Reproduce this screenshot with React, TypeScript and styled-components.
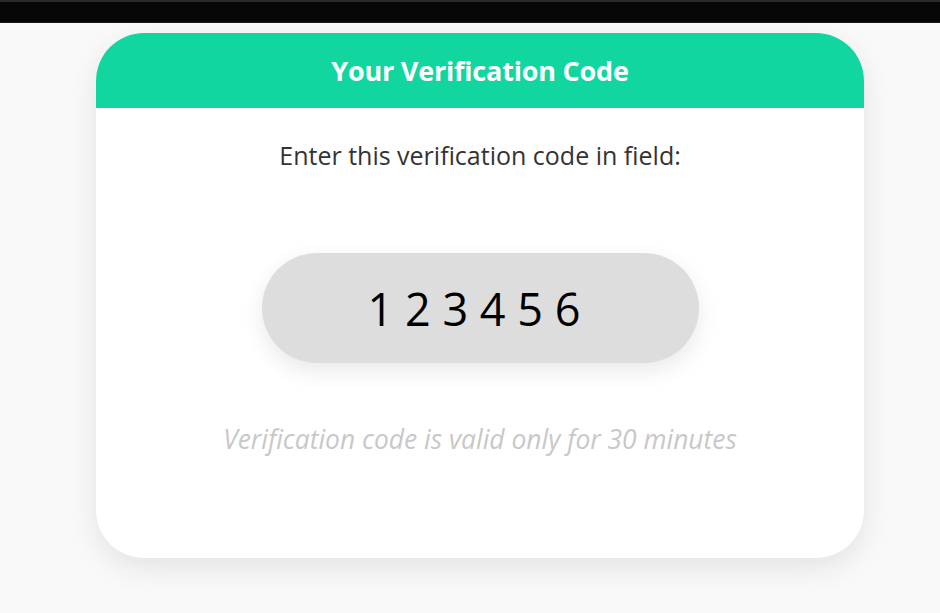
import React from 'react'
import styled, {createGlobalStyle} from 'styled-components'

const GlobalStyle = createGlobalStyle`
    html, body {
        margin: 0;
        padding: 0;
        background: #f9f9f9;
        font-family: "Open Sans", "Noto Sans", sans-serif;
    }
`

const TopBar = styled.div`
    height: 20px;
    background: #070707;
    border-top: 2px solid #2a2a2a;
    border-bottom: 1px solid #1a1a1a;
`

const Page = styled.div`
    padding: 10px 0 40px 96px;
`

const Card = styled.div`
    width: 768px;
    height: 525px;
    background: #ffffff;
    border-radius: 48px;
    overflow: hidden;
    box-shadow: 0 10px 30px rgba(0, 0, 0, 0.09);
    display: flex;
    flex-direction: column;
`

const Header = styled.div`
    height: 75px;
    background: #11d6a0;
    color: #ffffff;
    display: flex;
    align-items: center;
    justify-content: center;
    font-size: 27px;
    font-weight: 700;
    letter-spacing: -0.2px;
`

const Body = styled.div`
    display: flex;
    flex-direction: column;
    align-items: center;
`

const Prompt = styled.p`
    margin: 30px 0 0;
    font-size: 25px;
    color: #333333;
`

const CodeBox = styled.div`
    margin-top: 81px;
    width: 437px;
    height: 110px;
    border-radius: 55px;
    background: #dddddd;
    box-shadow: 0 8px 22px rgba(0, 0, 0, 0.09);
    display: flex;
    align-items: center;
    justify-content: center;
    font-size: 45px;
    color: #000000;
    padding-right: 12px;
    box-sizing: border-box;
`

const Note = styled.p`
    margin: 58px 0 0;
    font-size: 26.4px;
    font-style: italic;
    color: #c8c8c8;
`

export default function App() {
    return (
        <>
            <GlobalStyle/>
            <TopBar/>
            <Page>
                <Card>
                    <Header>Your Verification Code</Header>
                    <Body>
                        <Prompt>Enter this verification code in field:</Prompt>
                        <CodeBox>1 2 3 4 5 6</CodeBox>
                        <Note>Verification code is valid only for 30 minutes</Note>
                    </Body>
                </Card>
            </Page>
        </>
    )
}
